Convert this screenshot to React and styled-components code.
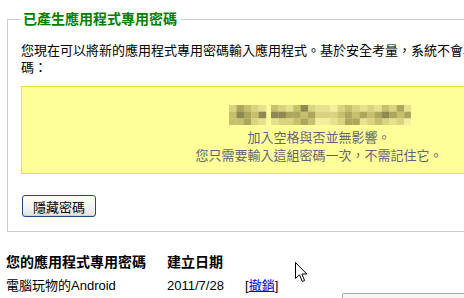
import styled, { createGlobalStyle } from 'styled-components';

const GlobalStyle = createGlobalStyle`
  html, body {
    margin: 0;
    padding: 0;
    background: #fff;
    overflow: hidden;
  }
  body {
    font-family: "Liberation Sans", "Noto Sans CJK TC", sans-serif;
    font-size: 13px;
    color: #000;
  }
`;

const Page = styled.div`
  position: relative;
  width: 464px;
  height: 298px;
  padding-top: 11px;
  box-sizing: border-box;
`;

const Panel = styled.fieldset`
  margin: 0 0 0 7px;
  padding: 0 13px 14px 13px;
  width: 596px;
  border: 1px solid #cccccc;
  border-top-color: #cfcfcf;
`;

const Legend = styled.legend`
  padding: 0 4px 0 2px;
  font-size: 14px;
  line-height: 17px;
  font-weight: bold;
  color: #008000;
`;

const Intro = styled.p`
  margin: 14px 0 10px;
  line-height: 17px;
`;

const NoticeBox = styled.div`
  box-sizing: border-box;
  height: 88px;
  padding-top: 18px;
  background: #ffff99;
  border: 1px solid #ebe23a;
  border-bottom-color: #efe620;
  text-align: center;
`;

const Hint = styled.div`
  line-height: 18px;
  color: #63637a;
`;

const Mosaic = styled.svg`
  display: block;
  margin: 0 auto 4px;
  position: relative;
  left: 1px;
`;

const HideButton = styled.button`
  margin: 21px 0 0 1px;
  width: 74px;
  height: 22px;
  padding: 0;
  font-family: inherit;
  font-size: 13px;
  color: #000;
  border: 1px solid #1c4c86;
  border-radius: 3px;
  background: linear-gradient(#ffffff, #f3f2ee 60%, #e3e1d8);
  box-shadow: inset 0 -1px 0 #d6d3c6;
`;

const Table = styled.div`
  margin: 22px 0 0 6px;
  display: grid;
  grid-template-columns: 161px 78px auto;
  grid-auto-rows: 23px;
  line-height: 17px;
`;

const HeadCell = styled.div`
  font-size: 14px;
  font-weight: bold;
`;

const Cell = styled.div``;

const RevokeLink = styled.a`
  color: #0000dd;
  text-decoration: underline;
`;

const Pointer = styled.svg`
  position: absolute;
  left: 295px;
  top: 262px;
`;

const PeekBox = styled.div`
  position: absolute;
  left: 342px;
  top: 293px;
  width: 140px;
  height: 20px;
  box-sizing: border-box;
  border: 1px solid #a8a8a8;
  border-radius: 2px;
  background: #f6f6f2;
  padding: 1px 3px;
  font-size: 11px;
  line-height: 14px;
  color: #333;
  overflow: hidden;
  white-space: nowrap;
`;

const palette = ['#f3ef9f', '#e6e18f', '#d9d380', '#c6bf6e', '#ada65d', '#8e8852'];

const groupA = [
  [2, 4, 3, 2, 1],
  [3, 5, 4, 3, 5],
  [3, 3, 4, 2, 1],
];

const groupB = [
  [3, 2, 1, 3, 5, 2, 1, 1, 0, 2, 3, 2, 1, 2, 1, 3, 2, 4, 1],
  [5, 5, 4, 4, 3, 4, 2, 2, 2, 3, 4, 3, 4, 3, 4, 5, 4, 3, 4],
  [1, 2, 2, 3, 4, 3, 0, 0, 1, 2, 4, 4, 1, 2, 3, 2, 1, 2, 0],
];

const CELL_W = 7.4;
const CELL_H = 6.7;

function MosaicBlock({ rows, offset }) {
  return rows.flatMap((row, r) =>
    row.map((c, i) => (
      <rect
        key={`${offset}-${r}-${i}`}
        x={offset + i * CELL_W}
        y={r * CELL_H}
        width={CELL_W + 0.2}
        height={CELL_H + 0.2}
        fill={palette[c]}
      />
    ))
  );
}

function PasswordMosaic() {
  const gap = 5;
  const bOffset = groupA[0].length * CELL_W + gap;
  const width = bOffset + groupB[0].length * CELL_W;
  return (
    <Mosaic width={width} height={CELL_H * 3} viewBox={`0 0 ${width} ${CELL_H * 3}`}>
      <MosaicBlock rows={groupA} offset={0} />
      <MosaicBlock rows={groupB} offset={bOffset} />
    </Mosaic>
  );
}

export default function App() {
  return (
    <>
      <GlobalStyle />
      <Page>
        <Panel>
          <Legend>已產生應用程式專用密碼</Legend>
          <Intro>
            您現在可以將新的應用程式專用密碼輸入應用程式。基於安全考量，系統不會再次顯示這組應用程式密碼：
          </Intro>
          <NoticeBox>
            <PasswordMosaic />
            <Hint>加入空格與否並無影響。</Hint>
            <Hint>您只需要輸入這組密碼一次，不需記住它。</Hint>
          </NoticeBox>
          <HideButton type="button">隱藏密碼</HideButton>
        </Panel>

        <Table>
          <HeadCell>您的應用程式專用密碼</HeadCell>
          <HeadCell>建立日期</HeadCell>
          <HeadCell />
          <Cell>電腦玩物的Android</Cell>
          <Cell>2011/7/28</Cell>
          <Cell>
            [<RevokeLink href="#">撤銷</RevokeLink>]
          </Cell>
        </Table>

        <Pointer width="13" height="21" viewBox="0 0 13 21">
          <path
            d="M0.5 0.5 L0.5 16.5 L4.5 12.8 L7.3 19.5 L9.6 18.5 L6.9 12 L11.8 12 Z"
            fill="#fff"
            stroke="#000"
            strokeWidth="1"
            strokeLinejoin="miter"
          />
        </Pointer>

        <PeekBox>http://www.example.com/account</PeekBox>
      </Page>
    </>
  );
}
